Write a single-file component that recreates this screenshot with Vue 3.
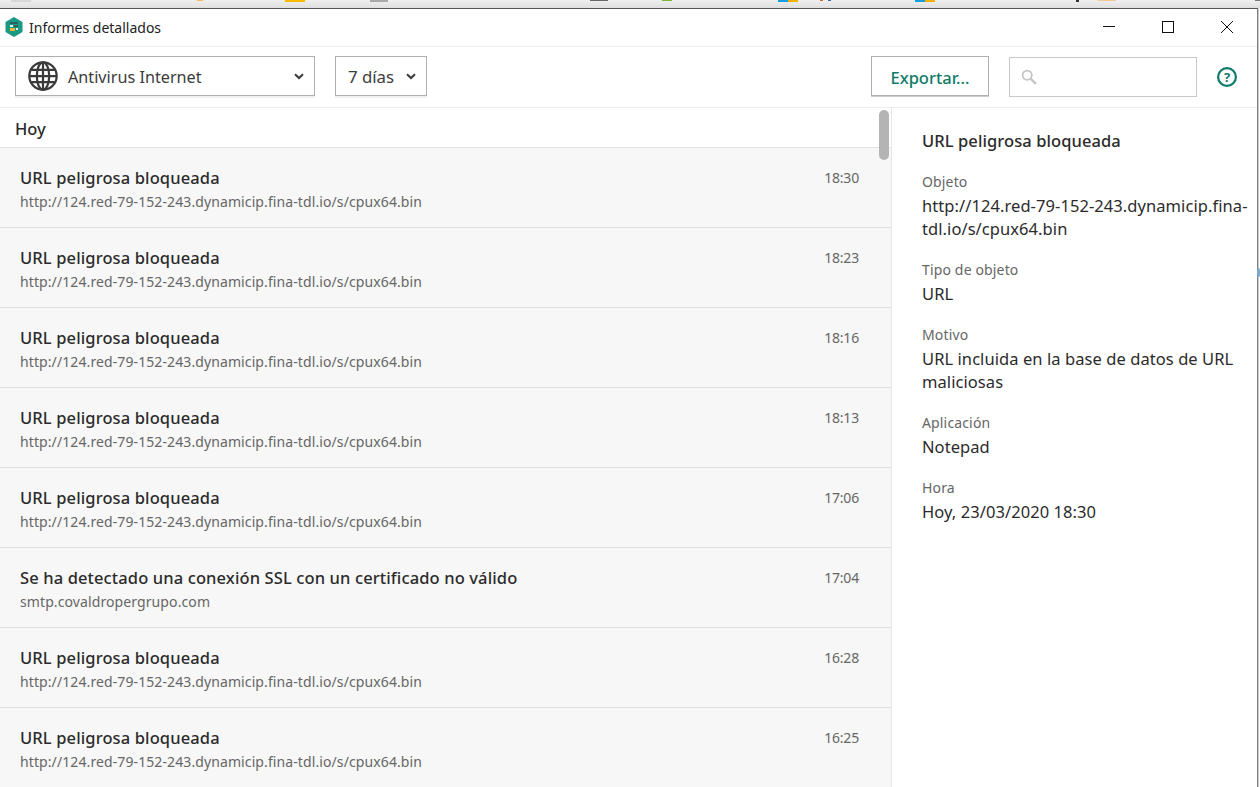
<script setup>
const url = 'http://124.red-79-152-243.dynamicip.fina-tdl.io/s/cpux64.bin'
const items = [
  ['URL peligrosa bloqueada', url, '18:30'],
  ['URL peligrosa bloqueada', url, '18:23'],
  ['URL peligrosa bloqueada', url, '18:16'],
  ['URL peligrosa bloqueada', url, '18:13'],
  ['URL peligrosa bloqueada', url, '17:06'],
  ['Se ha detectado una conexión SSL con un certificado no válido', 'smtp.covaldropergrupo.com', '17:04'],
  ['URL peligrosa bloqueada', url, '16:28'],
  ['URL peligrosa bloqueada', url, '16:25'],
]
const bits = [
  { x: 11, w: 20, h: 2, c: '#d8d8d8' },
  { x: 197, w: 6, h: 1, c: '#f3c05a' },
  { x: 285, w: 20, h: 2, c: '#f5bb00' },
  { x: 370, w: 18, h: 2, c: '#a9a9a9' },
  { x: 590, w: 18, h: 1, c: '#666666' },
  { x: 662, w: 10, h: 1, c: '#7cb342' },
  { x: 778, w: 10, h: 2, c: '#10a0e0' },
  { x: 788, w: 10, h: 2, c: '#f5b000' },
  { x: 820, w: 3, h: 1, c: '#c0703a' },
  { x: 828, w: 3, h: 1, c: '#3a6ea5' },
  { x: 915, w: 10, h: 2, c: '#10a0e0' },
  { x: 925, w: 10, h: 2, c: '#f5b000' },
  { x: 1076, w: 3, h: 2, c: '#333333' },
  { x: 1098, w: 18, h: 1, c: '#f3c99a' },
  { x: 1255, w: 5, h: 1, c: '#777777' },
]
const bitStyle = (b) => ({ left: b.x + 'px', width: b.w + 'px', height: b.h + 'px', background: b.c })
</script>

<template>
  <div class="screen">
    <div class="strip">
      <i v-for="(b, i) in bits" :key="i" class="bit" :style="bitStyle(b)"></i>
    </div>
    <div class="window">
      <header class="titlebar">
        <svg class="logo" width="18" height="20" viewBox="0 0 18 20">
          <path d="M9 0 L17.5 5 V15 L9 20 L0.5 15 V5 Z" fill="#1a9a83" />
          <rect x="5" y="5" width="8" height="2" fill="#2f5f63" />
          <rect x="5" y="8" width="3" height="2" fill="#e8efe9" />
          <rect x="9" y="8" width="4" height="2" fill="#2f5f63" />
          <rect x="5" y="11" width="5" height="3" fill="#f2b632" />
          <rect x="11" y="11" width="2" height="2" fill="#e8efe9" />
        </svg>
        <span class="title">Informes detallados</span>
        <div class="winbtns">
          <svg width="14" height="14" viewBox="0 0 14 14"><path d="M1 6.5H13" stroke="#111" /></svg>
          <svg width="14" height="14" viewBox="0 0 14 14"><rect x="1.5" y="1.5" width="11" height="11" fill="none" stroke="#111" /></svg>
          <svg width="14" height="14" viewBox="0 0 14 14"><path d="M1 1L13 13M13 1L1 13" stroke="#111" /></svg>
        </div>
      </header>

      <div class="toolbar">
        <div class="select wide">
          <svg class="globe" width="30" height="30" viewBox="0 0 32 32" fill="none" stroke="#3a3a3a" stroke-width="2.4">
            <circle cx="16" cy="16" r="14.6" />
            <ellipse cx="16" cy="16" rx="6.6" ry="14.6" />
            <path d="M16 1.5V30.5M1.5 16H30.5M3.5 9.5H28.5M3.5 22.5H28.5" />
          </svg>
          <span class="sel-text">Antivirus Internet</span>
          <svg class="chev" width="10" height="7" viewBox="0 0 10 7"><path d="M1 1.2L5 5L9 1.2" fill="none" stroke="#3a3a3a" stroke-width="2" /></svg>
        </div>
        <div class="select narrow">
          <span class="sel-text">7 días</span>
          <svg class="chev" width="10" height="7" viewBox="0 0 10 7"><path d="M1 1.2L5 5L9 1.2" fill="none" stroke="#3a3a3a" stroke-width="2" /></svg>
        </div>
        <div class="spacer"></div>
        <button class="export">Exportar...</button>
        <div class="search">
          <svg width="16" height="16" viewBox="0 0 16 16" fill="none" stroke="#c4c4c4"><circle cx="6.2" cy="6.2" r="4.6" stroke-width="1.8" /><path d="M9.8 9.8L15 15" stroke-width="2.4" /></svg>
        </div>
        <svg class="help" width="20" height="20" viewBox="0 0 20 20">
          <circle cx="10" cy="10" r="8.9" fill="none" stroke="#0f7a68" stroke-width="2.2" />
          <text x="10" y="14.5" text-anchor="middle" class="help-q">?</text>
        </svg>
      </div>

      <div class="body">
        <section class="list">
          <div class="group">Hoy</div>
          <div v-for="(it, i) in items" :key="i" class="row">
            <div class="row-main">
              <div class="row-title">{{ it[0] }}</div>
              <div class="row-url">{{ it[1] }}</div>
            </div>
            <div class="row-time">{{ it[2] }}</div>
          </div>
          <div class="thumb"></div>
        </section>
        <aside class="detail">
          <h2 class="d-title">URL peligrosa bloqueada</h2>
          <div class="field">
            <div class="label">Objeto</div>
            <div class="value">http://124.red-79-152-243.dynamicip.fina-<br />tdl.io/s/cpux64.bin</div>
          </div>
          <div class="field">
            <div class="label">Tipo de objeto</div>
            <div class="value">URL</div>
          </div>
          <div class="field">
            <div class="label">Motivo</div>
            <div class="value">URL incluida en la base de datos de URL<br />maliciosas</div>
          </div>
          <div class="field">
            <div class="label">Aplicación</div>
            <div class="value">Notepad</div>
          </div>
          <div class="field">
            <div class="label">Hora</div>
            <div class="value">Hoy, 23/03/2020 18:30</div>
          </div>
        </aside>
      </div>
      <div class="edge-blob"></div>
    </div>
  </div>
</template>

<style>
html, body { margin: 0; height: 100%; overflow: hidden; background: #fff; }
</style>

<style scoped>
.screen {
  width: 1260px;
  height: 787px;
  overflow: hidden;
  background: #fff;
  font-family: "Noto Sans", "Open Sans", sans-serif;
  color: #2b2b2b;
}
.strip {
  height: 8px;
  position: relative;
  background: linear-gradient(#efefef, #dfdfdf);
}
.bit { position: absolute; top: 0; display: block; }
.window {
  height: 779px;
  width: 1258px;
  border-top: 1px solid #555;
  border-right: 1px solid #808080;
  box-shadow: 1px 0 0 #c9c9c9;
  background: #fff;
  box-sizing: border-box;
  display: flex;
  flex-direction: column;
  position: relative;
}
.edge-blob {
  position: absolute;
  left: 1257px;
  top: 259px;
  width: 3px;
  height: 9px;
  border-radius: 2px;
  background: #7fa8c9;
}
.titlebar {
  height: 38px;
  flex: none;
  box-sizing: border-box;
  display: flex;
  align-items: center;
  padding: 0 0 1px 5px;
  border-bottom: 1px solid #ececec;
}
.logo { margin-right: 6px; }
.title { font-size: 14px; color: #222; margin-top: 1px; }
.winbtns {
  margin-left: auto;
  display: flex;
  gap: 45px;
  padding-right: 23px;
}
.toolbar {
  height: 61px;
  flex: none;
  box-sizing: border-box;
  border-bottom: 1px solid #ececec;
  display: flex;
  align-items: center;
  padding: 0 20px 2px 15px;
}
.select {
  height: 40px;
  box-sizing: border-box;
  border: 1px solid #b0b0b0;
  display: flex;
  align-items: center;
  box-shadow: 0 2px 0 #f0f0f0;
}
.wide { width: 300px; padding: 0 10px 0 12px; margin-right: 20px; }
.narrow { width: 92px; padding: 0 10px 0 12px; }
.globe { margin-right: 10px; }
.sel-text { font-size: 16.2px; color: #3c3c3c; margin-top: 2px; }
.narrow .sel-text { font-size: 16.8px; margin-top: 1px; }
.chev { margin-left: auto; }
.spacer { flex: 1; }
.export {
  width: 118px;
  height: 40px;
  box-sizing: border-box;
  background: #fff;
  border: 1px solid #b0b0b0;
  box-shadow: 0 1px 0 #ccc;
  font: 500 16.5px "Noto Sans", sans-serif;
  color: #0f7a68;
  padding: 2px 0 0;
  margin-right: 20px;
}
.search {
  width: 188px;
  height: 40px;
  box-sizing: border-box;
  border: 1px solid #c8c8c8;
  display: flex;
  align-items: center;
  padding-left: 11px;
  margin-right: 20px;
  margin-top: 2px;
}
.help { margin-top: 2px; }
.help-q { font: 700 13px "Noto Sans", sans-serif; fill: #0f7a68; }
.body { flex: 1; min-height: 0; display: flex; }
.list {
  width: 892px;
  flex: none;
  box-sizing: border-box;
  border-right: 1px solid #e6e6e6;
  position: relative;
  overflow: hidden;
}
.group {
  height: 40px;
  box-sizing: border-box;
  padding: 10px 0 0 15px;
  font-size: 16.5px;
  font-weight: 500;
  line-height: 22px;
  border-bottom: 1px solid #e4e4e4;
}
.row {
  height: 80px;
  box-sizing: border-box;
  background: #f7f7f7;
  border-bottom: 1px solid #e0e0e0;
  display: flex;
  justify-content: space-between;
  padding: 19px 32px 0 20px;
}
.row-title { font-size: 16.5px; font-weight: 500; line-height: 22px; color: #2b2b2b; letter-spacing: 0.12px; }
.row-url { font-size: 14px; line-height: 22px; margin-top: 2px; color: #666; letter-spacing: 0.1px; }
.row-time { font-size: 14px; line-height: 22px; color: #666; letter-spacing: -0.2px; }
.thumb {
  position: absolute;
  top: 2px;
  right: 2px;
  width: 10px;
  height: 50px;
  border-radius: 5px;
  background: #b4b4b4;
}
.detail { flex: 1; min-width: 0; padding: 22px 0 0 30px; overflow: hidden; }
.d-title { margin: 0 0 21px; font-size: 16.5px; font-weight: 500; line-height: 22px; color: #2b2b2b; letter-spacing: 0.08px; }
.field { margin-bottom: 21px; }
.field .label { font-size: 14px; line-height: 18px; color: #666; letter-spacing: 0.15px; margin-bottom: 3px; }
.field .value { font-size: 16.5px; line-height: 23px; color: #2b2b2b; letter-spacing: 0.07px; white-space: nowrap; }
</style>
